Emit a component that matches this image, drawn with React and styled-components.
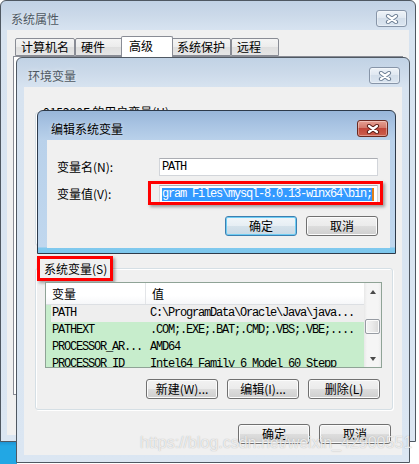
import React from "react";

// Styling
import styled, { createGlobalStyle } from "styled-components";

const UI = `"Noto Sans CJK SC", "Noto Sans", sans-serif`;
const MONO = `"Liberation Mono", "DejaVu Sans Mono", monospace`;

const tabs = ["计算机名", "硬件", "高级", "系统保护", "远程"];

const systemVars = [
  { name: "PATH", value: "C:\\ProgramData\\Oracle\\Java\\java...", selected: true },
  { name: "PATHEXT", value: ".COM;.EXE;.BAT;.CMD;.VBS;.VBE;...." },
  { name: "PROCESSOR_AR...", value: "AMD64" },
  { name: "PROCESSOR_ID", value: "Intel64 Family 6 Model 60 Stepp" },
  { name: "PROCESSOR_LE...", value: "6" },
];

const CloseX = ({ active }) => (
  <svg width="14" height="10" viewBox="0 0 14 10">
    <path
      d="M3 2 L11 8 M11 2 L3 8"
      stroke={active ? "#5a1d16" : "#6f8196"}
      strokeWidth="4.2"
      strokeLinecap="round"
    />
    <path d="M3 2 L11 8 M11 2 L3 8" stroke="#fff" strokeWidth="2.2" strokeLinecap="round" />
  </svg>
);

const App = () => {
  return (
    <>
      <GlobalStyle />
      <Desktop>
        <DesktopPatch />

        {/* 系统属性 */}
        <Window $x={0} $y={0} $w={416} $h={442} $frame="0 6px 6px">
          <TitleBar>
            <Title>系统属性</Title>
            <CloseButton>
              <CloseX />
            </CloseButton>
          </TitleBar>
          <SysClient>
            <TabStrip>
              {tabs.map((t) => (
                <Tab key={t} $sel={t === "高级"}>
                  {t}
                </Tab>
              ))}
            </TabStrip>
            <TabPanel />
          </SysClient>
        </Window>

        {/* 环境变量 */}
        <Window $x={16} $y={57} $w={394} $h={406} $frame="0 7px 7px">
          <TitleBar>
            <Title>环境变量</Title>
            <CloseButton>
              <CloseX />
            </CloseButton>
          </TitleBar>
          <EnvClient>
            <GroupBox>
              <PlainLegend>015290F 的用户变量(U)</PlainLegend>
              <UserBody />
            </GroupBox>
            <GroupBox $gap={10}>
              <MarkLegend>
                <RedBox>系统变量(S)</RedBox>
              </MarkLegend>
              <GroupBody>
                <ListView>
                  <ListBody>
                    <ListHeader>
                      <HeaderCell $w={100}>变量</HeaderCell>
                      <HeaderCell $w={240}>值</HeaderCell>
                    </ListHeader>
                    {systemVars.map((v) => (
                      <Row key={v.name} $sel={v.selected}>
                        <NameCell>{v.name}</NameCell>
                        <ValueCell>{v.value}</ValueCell>
                      </Row>
                    ))}
                  </ListBody>
                  <ScrollBar>
                    <ArrowButton>
                      <Arrow $up />
                    </ArrowButton>
                    <Thumb />
                    <ArrowButton $bottom>
                      <Arrow />
                    </ArrowButton>
                  </ScrollBar>
                </ListView>
                <ButtonRow $top={11}>
                  <Button>新建(W)...</Button>
                  <Button>编辑(I)...</Button>
                  <Button>删除(L)</Button>
                </ButtonRow>
              </GroupBody>
            </GroupBox>
            <ButtonRow $top={14}>
              <Button>确定</Button>
              <Button>取消</Button>
            </ButtonRow>
          </EnvClient>
        </Window>

        {/* 编辑系统变量 */}
        <Window $x={37} $y={110} $w={359} $h={144} $frame="0 5px 5px 9px" $active>
          <TitleBar>
            <Title $active>编辑系统变量</Title>
            <CloseButton $active>
              <CloseX active />
            </CloseButton>
          </TitleBar>
          <EditClient>
            <FormGrid>
              <FieldLabel>变量名(N):</FieldLabel>
              <TextBox>PATH</TextBox>
              <FieldLabel>变量值(V):</FieldLabel>
              <RedMark>
                <TextBox>
                  <Selection>gram Files\mysql-8.0.13-winx64\bin;</Selection>
                  <Caret />
                </TextBox>
              </RedMark>
            </FormGrid>
            <ButtonRow $top={13} $right={0}>
              <Button $default>确定</Button>
              <Button>取消</Button>
            </ButtonRow>
          </EditClient>
        </Window>

        <Watermark>https://blog.csdn.net/weixin_42900551</Watermark>
      </Desktop>
    </>
  );
};

const GlobalStyle = createGlobalStyle`
  html, body {
    margin: 0;
    padding: 0;
    background: #fff;
  }
  body {
    font-family: ${UI};
    font-size: 12px;
    color: #000;
  }
`;

const Desktop = styled.div`
  position: relative;
  width: 419px;
  height: 464px;
  overflow: hidden;
  background: #fff;
`;

const DesktopPatch = styled.div`
  position: absolute;
  left: 0;
  top: 441px;
  width: 17px;
  height: 23px;
  background: linear-gradient(#1c8fd0, #22a7e4 5px);
`;

const Window = styled.div`
  position: absolute;
  left: ${(p) => p.$x}px;
  top: ${(p) => p.$y}px;
  width: ${(p) => p.$w}px;
  height: ${(p) => p.$h}px;
  box-sizing: border-box;
  display: flex;
  flex-direction: column;
  padding: ${(p) => p.$frame};
  border: 1px solid ${(p) => (p.$active ? "#2d3a4a" : "#4f5862")};
  border-radius: 6px 6px 0 0;
  background: ${(p) =>
    p.$active
      ? "linear-gradient(#98b6d9 0, #a9c4e3 14px, #b9d1ea 29px, #c0d7ee calc(100% - 6px), #80c9ee calc(100% - 5px), #7cc6ec 100%)"
      : "linear-gradient(#c1d2e5 0, #cbd9e9 14px, #d7e3f0 29px, #dbe6f2 100%)"};
`;

const TitleBar = styled.div`
  flex: none;
  height: 29px;
  box-sizing: border-box;
  padding: 6px 0 0 4px;
  display: flex;
  align-items: center;
  justify-content: space-between;
`;

const Title = styled.span`
  font-family: ${UI};
  font-size: 12px;
  line-height: 16px;
  color: ${(p) => (p.$active ? "#000" : "#4e5862")};
  text-shadow: 0 0 4px rgba(255, 255, 255, 0.6);
`;

const CloseButton = styled.div`
  width: 31px;
  height: 17px;
  box-sizing: border-box;
  margin-right: 2px;
  border-radius: 3px;
  display: flex;
  align-items: center;
  justify-content: center;
  border: 1px solid ${(p) => (p.$active ? "#6a2920" : "#8795a8")};
  background: ${(p) =>
    p.$active
      ? "linear-gradient(#e6a093, #d37a6c 45%, #c2473a 50%, #cc5e4c)"
      : "linear-gradient(#eef3f8, #e0e8f1 45%, #d3deea 50%, #dce6f1)"};
  box-shadow: inset 0 0 0 1px rgba(255, 255, 255, 0.35);
`;

const SysClient = styled.div`
  flex: 1;
  min-height: 0;
  display: flex;
  flex-direction: column;
  background: #f0f0f0;
  padding: 6px 6px 40px;
`;

const TabStrip = styled.div`
  display: flex;
  align-items: flex-end;
  height: 21px;
  padding-left: 2px;
  margin-bottom: -1px;
`;

const Tab = styled.div`
  position: relative;
  z-index: ${(p) => (p.$sel ? 1 : 0)};
  box-sizing: border-box;
  min-width: ${(p) => (p.$sel ? 52 : 48)}px;
  height: ${(p) => (p.$sel ? 21 : 18)}px;
  margin: ${(p) => (p.$sel ? "0 -2px" : "0 0 1px")};
  padding: ${(p) => (p.$sel ? "0 7px 2px" : "0 5px")};
  border: 1px solid #898c95;
  border-bottom: ${(p) => (p.$sel ? "none" : "1px solid #898c95")};
  border-radius: 2px 2px 0 0;
  background: ${(p) =>
    p.$sel ? "#fff" : "linear-gradient(#f4f4f4, #ececec 50%, #dfdfdf 51%, #e6e6e6)"};
  font-size: 12px;
  line-height: 16px;
  display: flex;
  align-items: center;
  white-space: nowrap;
`;

const TabPanel = styled.div`
  flex: 1;
  border: 1px solid #898c95;
  background: #fff;
`;

const EnvClient = styled.div`
  flex: 1;
  min-height: 0;
  display: flex;
  flex-direction: column;
  background: #f0f0f0;
  padding: 17px 9px 0 11px;
`;

const GroupBox = styled.fieldset`
  margin: ${(p) => p.$gap || 0}px 0 0;
  padding: 0;
  min-width: 0;
  border: 1px solid #d5dfe5;
  border-radius: 3px;
  box-shadow: inset 1px 1px 0 #fff, 1px 1px 0 #fff;
`;

const PlainLegend = styled.legend`
  margin-left: 5px;
  padding: 0 2px;
  font-size: 12px;
  line-height: 16px;
`;

const MarkLegend = styled.legend`
  margin-left: 1px;
  padding: 0;
`;

const RedBox = styled.span`
  display: block;
  border: 3px solid #f00;
  padding: 0 3px 0 4px;
  font-size: 12px;
  line-height: 19px;
  background: #f0f0f0;
  box-shadow: 2px 2px 3px rgba(0, 0, 0, 0.35);
`;

const UserBody = styled.div`
  height: 125px;
`;

const GroupBody = styled.div`
  padding: 1px 10px 10px 9px;
  display: flex;
  flex-direction: column;
`;

const ListView = styled.div`
  height: 86px;
  box-sizing: border-box;
  border: 1px solid #8fa396;
  background: #c7edcc;
  display: flex;
  overflow: hidden;
`;

const ListBody = styled.div`
  flex: 1;
  min-width: 0;
  overflow: hidden;
`;

const ListHeader = styled.div`
  display: flex;
  height: 22px;
  box-sizing: border-box;
  background: linear-gradient(#fff, #fff 60%, #f6f7f9);
  border-bottom: 1px solid #dcdfe3;
`;

const HeaderCell = styled.div`
  flex: none;
  width: ${(p) => p.$w}px;
  box-sizing: border-box;
  padding-left: 6px;
  border-right: 1px solid #e3e5e8;
  font-size: 12px;
  line-height: 21px;
`;

const Row = styled.div`
  display: flex;
  height: 17px;
  white-space: nowrap;
  font-family: ${MONO};
  font-size: 12px;
  letter-spacing: -1.2px;
  line-height: 17px;
  background: ${(p) =>
    p.$sel ? "linear-gradient(to right, transparent 5px, #eeeeee 5px)" : "none"};
`;

const NameCell = styled.div`
  flex: none;
  width: 100px;
  box-sizing: border-box;
  padding-left: 6px;
`;

const ValueCell = styled.div`
  flex: none;
  padding-left: 4px;
`;

const ScrollBar = styled.div`
  flex: none;
  width: 17px;
  display: flex;
  flex-direction: column;
  background: linear-gradient(to right, #e8e8e8, #f5f5f5 3px, #f5f5f5 14px, #ececec);
`;

const ArrowButton = styled.div`
  height: 17px;
  flex: none;
  display: flex;
  align-items: center;
  justify-content: center;
  margin-top: ${(p) => (p.$bottom ? "auto" : 0)};
`;

const Arrow = styled.span`
  width: 0;
  height: 0;
  border-left: 3.5px solid transparent;
  border-right: 3.5px solid transparent;
  ${(p) =>
    p.$up ? "border-bottom: 4px solid #4a4a4a;" : "border-top: 4px solid #4a4a4a;"}
`;

const Thumb = styled.div`
  height: 15px;
  margin: 19px 1px 0;
  box-sizing: border-box;
  border: 1px solid #979ca3;
  border-radius: 2px;
  background: linear-gradient(to right, #f4f4f4, #e9e9e9 50%, #d9d9d9);
  box-shadow: inset 0 0 0 1px #fbfbfb;
`;

const ButtonRow = styled.div`
  display: flex;
  justify-content: flex-end;
  gap: 9px;
  margin-top: ${(p) => p.$top}px;
  margin-right: ${(p) => (p.$right === undefined ? 2 : p.$right)}px;
`;

const Button = styled.button`
  width: 72px;
  height: 20px;
  box-sizing: border-box;
  padding: 0;
  font-family: ${UI};
  font-size: 12px;
  line-height: 16px;
  color: #000;
  border-radius: 3px;
  border: 1px solid ${(p) => (p.$default ? "#3c7fb1" : "#707070")};
  background: ${(p) =>
    p.$default
      ? "linear-gradient(#f1f6f9, #e6eef4 50%, #d5e2eb 51%, #c9d9e5)"
      : "linear-gradient(#f2f2f2, #ebebeb 50%, #dddddd 51%, #cfcfcf)"};
  box-shadow: inset 0 0 0 1px ${(p) => (p.$default ? "#6fcdf3" : "#fcfcfc")};
`;

const EditClient = styled.div`
  flex: 1;
  min-height: 0;
  display: flex;
  flex-direction: column;
  background: #f0f0f0;
  padding: 18px 12px 0 10px;
`;

const FormGrid = styled.div`
  display: grid;
  grid-template-columns: 102px 1fr;
  grid-auto-rows: 18px;
  row-gap: 9px;
  align-items: center;
`;

const FieldLabel = styled.span`
  font-size: 12px;
  line-height: 18px;
  white-space: nowrap;
`;

const TextBox = styled.div`
  height: 18px;
  box-sizing: border-box;
  border: 1px solid #d2d5da;
  border-top-color: #abadb3;
  background: #fff;
  padding: 0 2px;
  display: flex;
  align-items: center;
  font-family: ${MONO};
  font-size: 12px;
  letter-spacing: -1.2px;
  line-height: 16px;
  white-space: nowrap;
  overflow: hidden;
`;

const RedMark = styled.div`
  position: relative;

  &::after {
    content: "";
    position: absolute;
    left: -11px;
    right: -5px;
    top: -4px;
    bottom: -2px;
    border: 3px solid #f00;
    box-shadow: 2px 2px 3px rgba(0, 0, 0, 0.35);
    pointer-events: none;
  }
`;

const Selection = styled.span`
  background: #3399ff;
  color: #fff;
  line-height: 13px;
`;

const Caret = styled.span`
  flex: none;
  width: 2px;
  height: 13px;
  background: #e0801c;
`;

const Watermark = styled.div`
  position: absolute;
  left: 140px;
  top: 433px;
  font-family: "Liberation Sans", Arial, sans-serif;
  font-size: 16px;
  line-height: 20px;
  color: rgba(255, 255, 255, 0.75);
  text-shadow: 0 0 1px rgba(110, 110, 110, 0.55);
  white-space: nowrap;
  pointer-events: none;
`;

export default App;
